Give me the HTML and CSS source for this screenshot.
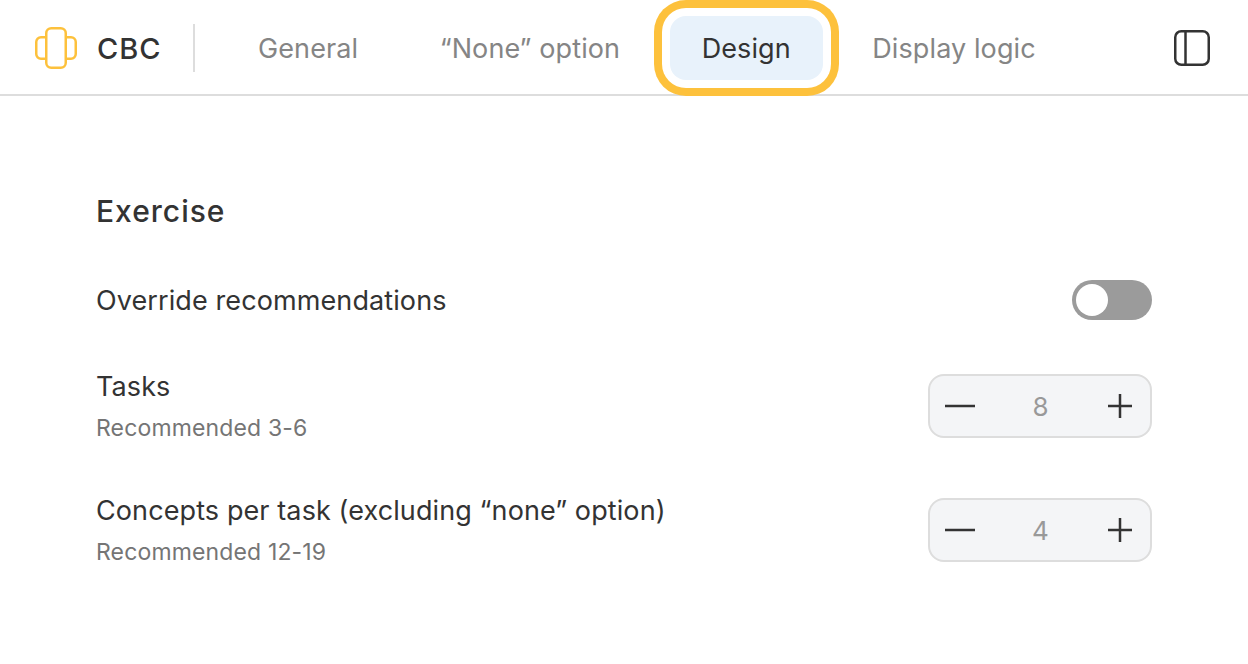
FILE: index.html
```html
<!DOCTYPE html>
<html lang="en">

<head>
    <meta charset="UTF-8">
    <meta name="viewport" content="width=device-width, initial-scale=1.0">
    <title>CBC Design</title>
    <link rel="stylesheet" href="styles.css">
</head>

<body>
    <header>
        <div class="brand">
            <svg class="brand-icon" width="42" height="42" viewBox="0 0 42 42" fill="none" stroke="#fdc13c" stroke-width="2.5">
                <rect x="11.25" y="1.25" width="19.5" height="39.5" rx="5"/>
                <path d="M11 10.25H6a4.75 4.75 0 0 0-4.75 4.75v12A4.75 4.75 0 0 0 6 31.75h5"/>
                <path d="M31 10.25h5A4.75 4.75 0 0 1 40.75 15v12A4.75 4.75 0 0 1 36 31.75h-5"/>
            </svg>
            <span class="brand-name">CBC</span>
        </div>
        <nav class="tabs">
            <a class="tab" href="#">General</a>
            <a class="tab" href="#">“None” option</a>
            <a class="tab active" href="#">Design</a>
            <a class="tab" href="#">Display logic</a>
        </nav>
        <button class="panel-btn" aria-label="Toggle panel">
            <svg width="36" height="36" viewBox="0 0 36 36" fill="none" stroke="#333" stroke-width="2.5">
                <rect x="1.25" y="1.25" width="33.5" height="33.5" rx="6"/>
                <path d="M11.5 1.25v33.5"/>
            </svg>
        </button>
    </header>

    <main>
        <h2>Exercise</h2>
        <div class="row row-toggle">
            <div class="label">Override recommendations</div>
            <span class="toggle"><span class="knob"></span></span>
        </div>
        <div class="row row-tasks">
            <div>
                <div class="label">Tasks</div>
                <div class="hint">Recommended 3-6</div>
            </div>
            <div class="stepper">
                <svg width="32" height="32" viewBox="0 0 32 32" stroke="#333" stroke-width="2.5"><path d="M1 16h30"/></svg>
                <span class="value">8</span>
                <svg width="26" height="26" viewBox="0 0 26 26" stroke="#333" stroke-width="2.5"><path d="M1 13h24M13 1v24"/></svg>
            </div>
        </div>
        <div class="row row-concepts">
            <div>
                <div class="label">Concepts per task (excluding “none” option)</div>
                <div class="hint">Recommended 12-19</div>
            </div>
            <div class="stepper">
                <svg width="32" height="32" viewBox="0 0 32 32" stroke="#333" stroke-width="2.5"><path d="M1 16h30"/></svg>
                <span class="value">4</span>
                <svg width="26" height="26" viewBox="0 0 26 26" stroke="#333" stroke-width="2.5"><path d="M1 13h24M13 1v24"/></svg>
            </div>
        </div>
    </main>
</body>

</html>
```

FILE: styles.css
```css
* {
    margin: 0;
    padding: 0;
    box-sizing: border-box;
}

body {
    font-family: 'Inter', 'Liberation Sans', sans-serif;
    background-color: #fff;
    color: #333;
    overflow: hidden;
}

header {
    height: 96px;
    padding: 2px 38px 0 35px;
    border-bottom: 2px solid #ddd;
    display: flex;
    align-items: center;
}

.brand {
    display: flex;
    align-items: center;
    gap: 20px;
    height: 48px;
    width: 160px;
    border-right: 2px solid #ddd;
}

.brand-icon {
    display: block;
}

.brand-name {
    font-size: 29px;
    font-weight: 500;
    letter-spacing: 1px;
}

.tabs {
    display: flex;
    gap: 17.5px;
    margin-left: 31px;
    flex-grow: 1;
}

.tab {
    height: 64px;
    padding: 0 32px;
    display: flex;
    align-items: center;
    font-size: 27px;
    letter-spacing: 0.1px;
    color: #858585;
    text-decoration: none;
    border-radius: 16px;
}

.tab.active {
    background-color: #e8f2fb;
    color: #333;
    box-shadow: 0 0 0 8px #fff, 0 0 0 16px #fdc13c;
}

.panel-btn {
    display: flex;
    border: none;
    background: none;
}

main {
    padding: 97px 96px 0;
}

h2 {
    font-size: 30px;
    font-weight: 500;
    line-height: 36px;
    letter-spacing: 1px;
}

.row {
    display: flex;
    justify-content: space-between;
    align-items: center;
}

.row-toggle {
    margin-top: 51px;
}

.row-toggle .label {
    padding-top: 2px;
}

.row-tasks {
    margin-top: 50px;
}

.row-concepts {
    margin-top: 52px;
}

.label {
    font-size: 27px;
    letter-spacing: 0.1px;
    line-height: 34px;
}

.hint {
    font-size: 23px;
    letter-spacing: 0.15px;
    line-height: 28px;
    margin-top: 10px;
    color: #757575;
}

.toggle {
    width: 80px;
    height: 40px;
    padding: 4px;
    border-radius: 20px;
    background-color: #9b9b9b;
}

.knob {
    display: block;
    width: 32px;
    height: 32px;
    border-radius: 50%;
    background-color: #fff;
}

.stepper {
    width: 224px;
    height: 64px;
    padding: 0 17px 0 14px;
    display: flex;
    align-items: center;
    justify-content: space-between;
    background-color: #f4f5f7;
    border: 2px solid #ddd;
    border-radius: 16px;
}

.value {
    font-size: 26px;
    margin-right: 2px;
    color: #999;
}
```
